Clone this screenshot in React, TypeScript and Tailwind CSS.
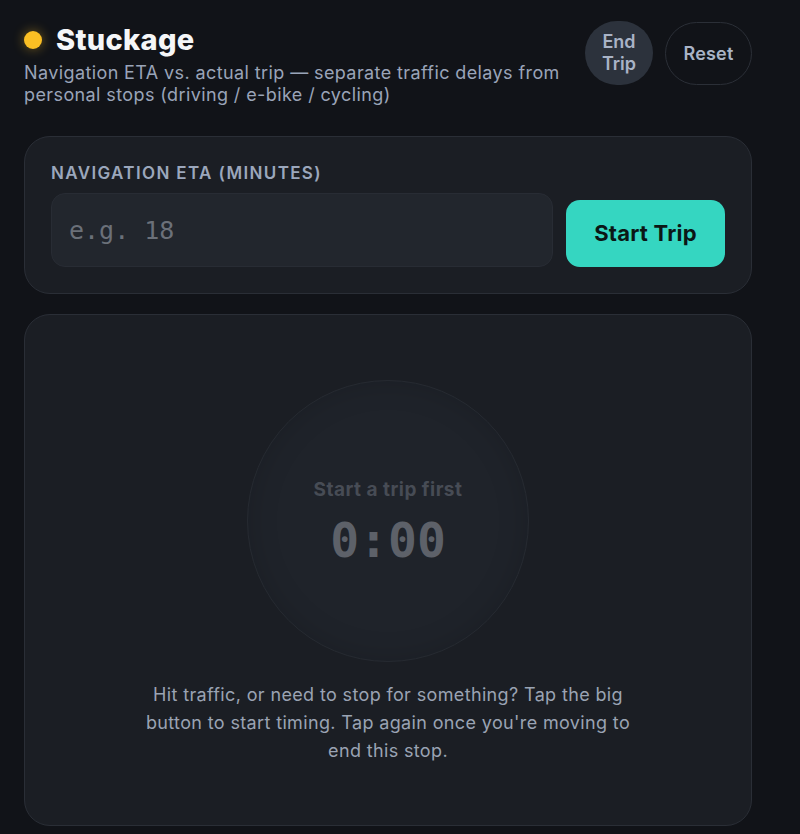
import { useState } from "react";

export default function App() {
  const [eta, setEta] = useState("");

  return (
    <div className="min-h-screen bg-[#111318] font-['Inter',sans-serif] text-[#e5e7eb]">
      <div className="w-[752px] pl-6 pt-5">
        {/* Header */}
        <header className="flex items-start justify-between">
          <div>
            <div className="flex items-center gap-[14px]">
              <span className="h-[18px] w-[18px] rounded-full bg-[#fbbf24] shadow-[0_0_12px_rgba(251,191,36,0.45)]" />
              <h1 className="text-[29px] font-extrabold leading-10 tracking-[0.01em] text-[#f5f6f8]">
                Stuckage
              </h1>
            </div>
            <p className="mt-[2px] text-[18px] leading-[22px] tracking-[0.022em] text-[#9aa4b8]">
              Navigation ETA vs. actual trip — separate traffic delays from
              <br />
              personal stops (driving / e-bike / cycling)
            </p>
          </div>
          <div className="flex items-center gap-3 pt-[1px]">
            <button className="flex h-[64px] w-[68px] items-center justify-center rounded-full bg-[#2c323c] text-[18px] font-semibold leading-[22px] text-[#a9b3c6]">
              End
              <br />
              Trip
            </button>
            <button className="h-[63px] w-[87px] rounded-full border border-[#2b2f37] text-[18px] font-semibold tracking-[0.01em] text-[#a9b3c6]">
              Reset
            </button>
          </div>
        </header>

        {/* ETA card */}
        <section className="mt-[30px] rounded-[26px] border border-[#2a2e36] bg-[#1b1e24] px-[26px] pb-[26px] pt-[26px]">
          <label className="block text-[17px] font-semibold uppercase leading-5 tracking-[0.08em] text-[#9ba7bc]">
            Navigation ETA (minutes)
          </label>
          <div className="mt-[10px] flex items-end gap-[13px]">
            <input
              value={eta}
              onChange={(e) => setEta(e.target.value)}
              placeholder="e.g. 18"
              className="h-[74px] flex-1 rounded-[14px] border border-[#282c34] bg-[#22262d] px-[17px] font-['DejaVu_Sans_Mono',monospace] text-[25px] text-[#d1d5db] outline-none placeholder:text-[#6b7079]"
            />
            <button className="h-[67px] w-[159px] rounded-[14px] bg-[#35d6c1] text-[22px] font-bold tracking-[0.01em] text-[#0b1716]">
              Start Trip
            </button>
          </div>
        </section>

        {/* Stop timer card */}
        <section className="mt-5 flex h-[512px] flex-col items-center rounded-[26px] border border-[#2a2e36] bg-[#1b1e24] pt-[65px]">
          <button
            disabled
            className="flex h-[282px] w-[282px] flex-col items-center justify-center rounded-full border border-[#262a31] bg-[#1f232a] pt-1 shadow-[inset_0_0_30px_rgba(0,0,0,0.15)]"
          >
            <span className="text-[19px] font-bold leading-6 tracking-[0.025em] text-[#474c55]">
              Start a trip first
            </span>
            <span className="mt-[10px] font-['DejaVu_Sans_Mono',monospace] text-[48px] font-bold leading-[56px] text-[#5d6169]">
              0:00
            </span>
          </button>
          <p className="mt-[19px] max-w-[500px] text-center text-[18px] leading-[28px] tracking-[0.02em] text-[#9aa3b3]">
            Hit traffic, or need to stop for something? Tap the big button to
            start timing. Tap again once you're moving to end this stop.
          </p>
        </section>
      </div>
    </div>
  );
}
